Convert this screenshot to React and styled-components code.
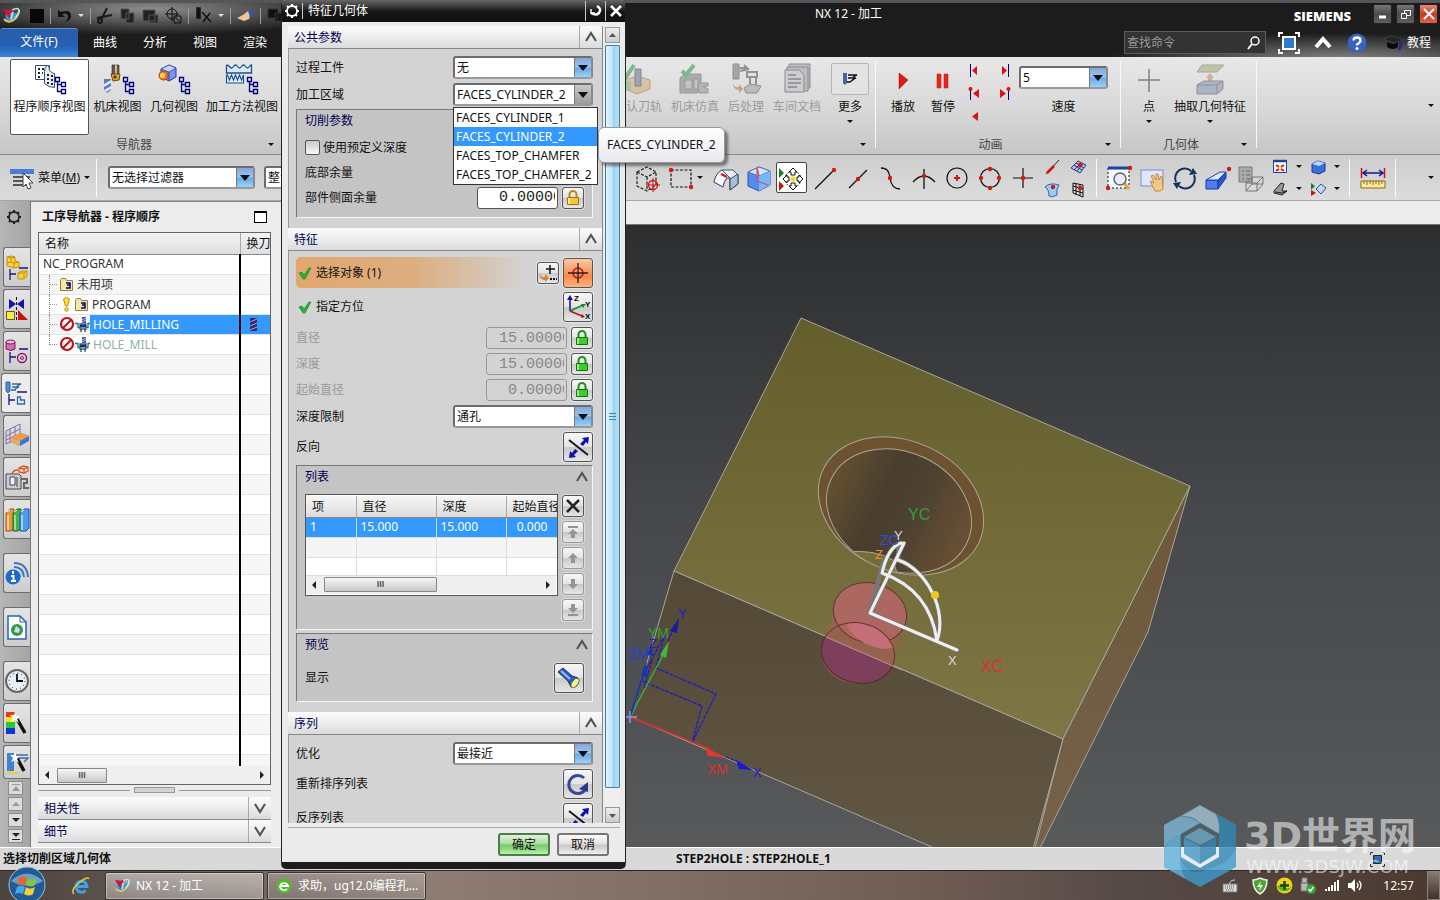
import styled, { createGlobalStyle, css } from "styled-components";

//////////////////////////////////////////[Styles section]//////////////////////////////////////////

const GlobalStyle = createGlobalStyle`
    * { box-sizing: border-box; }

    body {
        margin: 0;
        overflow: hidden;
        font: 12px/16px "Noto Sans", "Noto Sans CJK SC", sans-serif;
        color: #111;
        background: #333;
    }

    button, input, select { font: inherit; color: inherit; margin: 0; }
    button { padding: 0; }
`;

const Page = styled.div`
    position: relative;
    display: flex;
    flex-direction: column;
    height: 100vh;
    overflow: hidden;
`;

const Svg = styled.svg`
    display: block;
    flex: none;
    width: ${(props) => props.$w || 32}px;
    height: ${(props) => props.$h || props.$w || 32}px;
    overflow: visible;
`;

const Caret = styled.i`
    flex: none;
    border: 3px solid transparent;
    border-top-color: ${(props) => props.$color || "#111"};
    border-bottom: 0;
`;

const Spacer = styled.div`
    flex: ${(props) => (props.$w ? `0 0 ${props.$w}px` : "1")};
`;

/* header */

const Header = styled.header`
    flex: none;
    background: radial-gradient(ellipse 210px 26px at 150px 6px, #8d8d8d, transparent),
        radial-gradient(ellipse 240px 28px at 1340px 58px, #8a8a8a, transparent), #1c1c1c;
    border-top: 3px solid #55565a;
    color: #fff;
`;

const TitleRow = styled.div`
    display: flex;
    align-items: center;
    height: 25px;
`;

const QuickAccess = styled.div`
    display: flex;
    align-items: center;
    gap: 6px;
    width: 284px;
    padding-left: 2px;
    overflow: hidden;
`;

const QuickDivider = styled.i`
    width: 1px;
    height: 16px;
    background: #999;
`;

const WindowTitle = styled.div`
    flex: 1;
    padding: 0 0 4px 531px;
`;

const Brand = styled.div`
    margin-right: 20px;
    font-family: "Open Sans", sans-serif;
    font-weight: 800;
    font-size: 13px;
`;

const WindowButton = styled.button`
    display: grid;
    place-items: center;
    width: 19px;
    height: 20px;
    margin: 0 2px 3px;
    border: 1px solid #222;
    border-radius: 2px;
    background: ${(props) =>
        props.$close ? "linear-gradient(#e88a78, #c93a22 50%, #e0624a)" : "linear-gradient(#777, #4b4b4b 50%, #5e5e5e)"};
`;

const TabRow = styled.nav`
    display: flex;
    align-items: center;
    height: 29px;
`;

const Tab = styled.a`
    width: 50px;
    color: #fff;
    text-align: center;
    text-decoration: none;
    ${(props) =>
        props.$active &&
        css`
            align-self: stretch;
            width: 78px;
            margin-right: 2px;
            padding-top: 5px;
            border-radius: 3px 3px 0 0;
            border-top: 1px solid #5f8fd0;
            background: linear-gradient(#2a5ca8, #2360b4 60%, #3c86d8);
        `}
`;

const Search = styled.label`
    display: flex;
    align-items: center;
    width: 142px;
    height: 23px;
    margin-right: 10px;
    padding: 0 4px 0 2px;
    border: 1px solid #5c5c5c;
    background: #333;

    input {
        min-width: 0;
        flex: 1;
        border: 0;
        padding: 0;
        background: none;
        outline: none;
    }
    input::placeholder { color: #9a9a9a; }
`;

const PlainButton = styled.button`
    display: flex;
    align-items: center;
    justify-content: center;
    gap: 4px;
    flex: none;
    width: ${(props) => (props.$w ? `${props.$w}px` : "auto")};
    border: 0;
    background: none;
`;

/* ribbon */

const Ribbon = styled.div`
    display: flex;
    flex: none;
    height: 98px;
    background: linear-gradient(#e8e8e8, #d9d9d9 50%, #c6c6c6);
    border-bottom: 1px solid #8c8c8c;
`;

const RibbonGroup = styled.section`
    position: relative;
    display: flex;
    flex-direction: column;
    flex: none;
    width: ${(props) => props.$w}px;
    padding-top: 2px;
    ${(props) =>
        props.$line &&
        css`
            &::after {
                content: "";
                position: absolute;
                right: 0;
                top: 4px;
                bottom: 6px;
                width: 1px;
                background: #f8f8f8;
            }
        `}
`;

const RibbonItems = styled.div`
    display: flex;
    flex: 1;
    padding-left: ${(props) => props.$pad || 0}px;
`;

const GroupLabel = styled.div`
    display: flex;
    align-items: center;
    height: 24px;
    padding-right: 10px;
    color: #444;

    span { flex: 1; text-align: center; }
`;

const RibbonButton = styled.button`
    display: flex;
    flex-direction: column;
    align-items: center;
    flex: none;
    width: ${(props) => props.$w}px;
    height: 76px;
    padding-top: 3px;
    border: 1px solid ${(props) => (props.$active ? "#555" : "transparent")};
    border-radius: 2px;
    background: ${(props) => (props.$active ? "#fff" : "none")};
    white-space: nowrap;
    ${(props) => props.disabled && "color: #9b9b9b;"}
    ${(props) => (props.disabled || props.$pale) && "svg { opacity: 0.5; }"}

    span { margin: 4px 0 5px; }
`;

const MoreFrame = styled.i`
    display: grid;
    place-items: center;
    width: 38px;
    height: 32px;
    border: 1px solid #b5b5b5;
    border-radius: 2px;
    background: #e3e3e3;
`;

const PlayGrid = styled.div`
    display: grid;
    grid-template-columns: 29px 27px;
    grid-auto-rows: 23px;
    width: 56px;
`;

const SpeedField = styled.label`
    display: flex;
    flex-direction: column;
    align-items: center;
    gap: 10px;
    padding-top: 7px;
`;

/* selection bar */

const SelectionBar = styled.div`
    display: flex;
    align-items: center;
    flex: none;
    height: 46px;
    background: linear-gradient(#cdcdcd, #dcdcdc);
    border-bottom: 1px solid #a5a5a5;
`;

const ToolButton = styled.button`
    display: grid;
    place-items: center;
    flex: none;
    width: ${(props) => (props.$active ? 31 : props.$w || 33)}px;
    height: ${(props) => props.$h || 31}px;
    margin: 0 ${(props) => (props.$active ? 1 : 0)}px;
    border: ${(props) => (props.$active ? "1px solid #444" : "0")};
    border-radius: 2px;
    background: ${(props) => (props.$active ? "#fff" : "none")};
`;

const ToolGrid = styled.div`
    display: grid;
    grid-template-columns: ${(props) => props.$cols};
    align-items: center;
    justify-items: center;
`;

const BarLine = styled.i`
    flex: none;
    width: 1px;
    height: 38px;
    margin: 0 ${(props) => props.$gap || 6}px;
    background: #fafafa;
`;

/* select */

const SelectBox = styled.div`
    position: relative;
    flex: none;
    width: ${(props) => props.$w}px;
    height: 23px;
    border: 2px solid #6c6c6c;
    border-bottom-color: #999;
    border-right-color: #8a8a8a;
    border-radius: 3px;
    background: #fff;

    select {
        position: relative;
        z-index: 1;
        appearance: none;
        width: 100%;
        height: 100%;
        padding: 0 16px 0 2px;
        border: 0;
        outline: none;
        background: none;
        line-height: 16px;
    }

    &::before {
        content: "";
        position: absolute;
        top: 0;
        right: 0;
        width: 16px;
        height: 100%;
        border-left: 1px solid #777;
        background: ${(props) =>
            props.$open ? "linear-gradient(#c9c9c9, #9c9c9c)" : "linear-gradient(#7fa9dc, #9cc2ee 45%, #6aaae8 55%, #9bd2fa)"};
    }

    &::after {
        content: "";
        position: absolute;
        top: 7px;
        right: 3px;
        border: 5px solid transparent;
        border-top: 6px solid #111;
        border-bottom: 0;
        pointer-events: none;
    }
`;

/* workspace */

const Workspace = styled.main`
    display: flex;
    flex: 1;
    min-height: 0;
    background: #ececec;
`;

const ResourceBar = styled.aside`
    display: flex;
    flex-direction: column;
    align-items: flex-end;
    gap: 2px;
    flex: none;
    width: 31px;
    padding-top: 8px;
    background: linear-gradient(90deg, #b6b6b6, #a5a5a5);
    border-right: 1px solid #777;
    overflow: hidden;
`;

const ResourceTab = styled.button`
    display: grid;
    place-items: center;
    flex: none;
    width: ${(props) => (props.$active ? 29 : 27)}px;
    height: ${(props) => props.$h || 40}px;
    margin-top: ${(props) => props.$gap || 0}px;
    border: 1px solid #6d6d6d;
    border-right: 0;
    border-radius: 3px 0 0 3px;
    background: ${(props) => (props.$active ? "#ececec" : "linear-gradient(#e4e4e4, #cdcdcd)")};
    overflow: hidden;
`;

const GearSlot = styled.div`
    width: 31px;
    height: 36px;
    padding-left: 7px;
`;

const MiniScroll = styled.button`
    display: grid;
    place-items: center;
    flex: none;
    width: 15px;
    height: 14px;
    margin-right: 7px;
    border: 1px solid #8a8a8a;
    background: #dcdcdc;
`;

const Navigator = styled.section`
    display: flex;
    flex-direction: column;
    flex: none;
    width: 251px;
    padding: 0 11px 4px 7px;
    border-top: 1px solid #888;
`;

const NavigatorTitle = styled.h2`
    display: flex;
    align-items: center;
    justify-content: space-between;
    height: 30px;
    margin: 0;
    padding: 0 4px;
    font-size: 12px;
`;

const MaximizeButton = styled.button`
    width: 13px;
    height: 12px;
    border: 1px solid #000;
    border-top-width: 2px;
    background: #fff;
`;

const TreeFrame = styled.div`
    display: flex;
    flex-direction: column;
    flex: 1;
    min-height: 0;
    border: 1px solid #666;
    background: #fff;
`;

const TreeScroll = styled.div`
    flex: 1;
    min-height: 0;
    overflow: hidden;
`;

const Tree = styled.table`
    width: 100%;
    table-layout: fixed;
    border-collapse: collapse;

    th {
        height: 21px;
        padding: 2px 6px 0;
        overflow: hidden;
        text-align: left;
        font-weight: normal;
        white-space: nowrap;
        background: linear-gradient(#f3f3f3, #dddfe0);
        border-bottom: 1px solid #888;
    }
    th + th { width: 30px; border-left: 1px solid #aaa; }

    td {
        height: 20px;
        padding: 0;
        color: #333;
        border-bottom: 1px solid #e3e3e3;
    }
    td + td { border-left: 2px solid #000; }
    tr:nth-child(even) td { background: #f6f6f6; }
`;

const TreeCell = styled.div`
    display: flex;
    align-items: center;
    height: 19px;
    padding-left: ${(props) => (props.$root ? 4 : 10)}px;
    white-space: nowrap;
`;

const Branch = styled.i`
    align-self: flex-start;
    flex: none;
    width: 9px;
    height: ${(props) => (props.$last ? 10 : 20)}px;
    margin-right: 1px;
    border-left: 1px dotted #888;
    background: linear-gradient(90deg, #999 50%, transparent 50%) 0 9px / 2px 1px repeat-x;
`;

const TreeLabel = styled.span`
    flex: 1;
    padding-left: 3px;
    line-height: 19px;
    color: ${(props) => props.$color || "inherit"};
    background: ${(props) => (props.$selected ? "#3399ff" : "none")};
`;

const ToolMark = styled.div`
    height: 19px;
    padding: 3px 0 0 9px;
    background: ${(props) => (props.$selected ? "#3399ff" : "none")};
`;

const HScroll = styled.div`
    display: flex;
    align-items: center;
    flex: none;
    height: 18px;
    padding: 0 6px;
    background: #efefef;
`;

const HThumb = styled.div`
    width: ${(props) => props.$w}px;
    height: 15px;
    margin: 0 auto 0 8px;
    border: 1px solid #888;
    border-radius: 1px;
    background: linear-gradient(#f5f5f5, #e0e0e0 50%, #c8c8c8);
    color: #555;
    font: bold 9px/12px "Liberation Sans", sans-serif;
    text-align: center;
`;

const SideArrow = styled.i`
    border: 4px solid transparent;
    ${(props) => (props.$right ? "border-left-color: #222; border-right: 0;" : "border-right-color: #222; border-left: 0;")}
`;

const Splitter = styled.div`
    display: flex;
    align-items: center;
    gap: 4px;
    height: 12px;
    padding-bottom: 2px;

    &::before, &::after { content: ""; flex: 1; height: 1px; background: #999; }
    i { width: 41px; height: 6px; border: 1px solid #999; background: #d3d3d3; }
`;

const barHead = css`
    display: flex;
    align-items: center;
    flex: none;
    width: 100%;
    height: 23px;
    padding: 0 0 0 6px;
    border: 0;
    border-bottom: 1px solid #888;
    background: linear-gradient(#fbfbfb, #eceded 50%, #d9dbdc);
    color: #000050;
    text-align: left;

    span {
        flex: 1;
        align-self: stretch;
        margin-right: 5px;
        line-height: 23px;
        border-right: 1px solid #aaa;
    }
    svg { margin-right: 5px; }
`;

const FoldBar = styled.button`
    ${barHead}
`;

const Viewport = styled.div`
    flex: 1;
    display: flex;
    min-width: 0;
    margin-top: 23px;
    background: linear-gradient(#2d2e2f, #45474a 45%, #58595b);
    border-top: 1px solid #777;
    overflow: hidden;
`;

const Scene = styled.svg`
    display: block;
    width: 100%;
    height: 100%;
    font-family: "Liberation Sans", sans-serif;
`;

/* status + taskbar */

const StatusBar = styled.footer`
    display: flex;
    align-items: center;
    flex: none;
    height: 23px;
    padding: 0 55px 0 3px;
    border-top: 1px solid #fff;
    background: #d9d9d9;
    font-weight: bold;
`;

const Taskbar = styled.div`
    display: flex;
    align-items: center;
    flex: none;
    height: 30px;
    border-top: 1px solid #2c2520;
    background: linear-gradient(90deg, #4b4340 0, #8d7d75 30%, #826f66 45%, #6e5c53 65%, #564a48 78%, #4c3a2f 100%);
    color: #fff;
`;

const TaskButton = styled.button`
    display: flex;
    align-items: center;
    gap: 6px;
    width: 159px;
    height: 28px;
    margin-right: 3px;
    padding-left: 8px;
    border: 1px solid #3c3430;
    border-radius: 2px;
    box-shadow: inset 0 0 0 1px rgba(255, 255, 255, 0.35);
    white-space: nowrap;
    background: linear-gradient(rgba(255, 255, 255, ${(props) => (props.$active ? 0.5 : 0.25)}), rgba(255, 255, 255, ${(props) => (props.$active ? 0.3 : 0.08)}));
`;

const ShowDesktop = styled.button`
    width: 13px;
    height: 29px;
    border: 1px solid #8b8078;
    background: linear-gradient(#857a74, #40332b);
`;

const Watermark = styled.div`
    position: absolute;
    right: 24px;
    bottom: 13px;
    z-index: 3;
    display: flex;
    align-items: center;
    gap: 8px;
    pointer-events: none;
    color: rgba(255, 255, 255, 0.55);

    strong { display: block; font: bold 38px/42px "DejaVu Sans", "Noto Sans CJK SC", sans-serif; }
    small { display: block; padding-left: 2px; font: 18px/20px "DejaVu Sans", sans-serif; }
`;

/* dialog */

const Dialog = styled.section`
    position: absolute;
    z-index: 5;
    left: 281px;
    top: 0;
    bottom: 31px;
    display: flex;
    flex-direction: column;
    width: 345px;
    border: 1px solid #222;
    border-top: 0;
    border-bottom: 7px solid #1c1c1c;
    border-radius: 5px;
    background: #ebebeb;
`;

const DialogTitle = styled.div`
    display: flex;
    align-items: center;
    flex: none;
    height: 22px;
    border-radius: 4px 4px 0 0;
    background: linear-gradient(#666, #2a2a2a 40%, #161616 50%, #101010);
    color: #fff;

    h1 {
        flex: 1;
        margin: 0;
        padding-left: 5px;
        font-size: 12px;
        font-weight: normal;
        border-left: 1px solid #ccc;
    }
`;

const DialogTitleButton = styled.button`
    display: grid;
    place-items: center;
    width: 20px;
    height: 20px;
    border: 0;
    border-left: ${(props) => (props.$line ? "1px solid #ccc" : "0")};
    background: none;
`;

const DialogBody = styled.div`
    display: flex;
    flex: 1;
    min-height: 0;
    margin: 4px 5px 0 6px;
    border-bottom: 2px solid #eee;
`;

const DialogScroll = styled.div`
    width: 315px;
    overflow: hidden;
    border-right: 1px solid #888;
    background: #d3d3d3;
`;

const Section = styled.div`
    padding: ${(props) => props.$top || 5}px 9px 10px 7px;
    border-left: 1px solid #999;
`;

const SectionHead = styled.button`
    ${barHead}
`;

const Row = styled.div`
    display: flex;
    align-items: center;
    gap: 4px;
    height: ${(props) => props.$h || 27}px;
    padding-left: ${(props) => props.$pad || 0}px;
    color: ${(props) => (props.$dim ? "#999" : "#111")};

    > label, > span { flex: 1; }
`;

const SelectRow = styled(Row)`
    border-radius: 5px 0 0 5px;
    background: linear-gradient(90deg, #e2a76e, #dcae80 40%, #d3d3d3 78%);
`;

const Group = styled.fieldset`
    min-width: 0;
    margin: ${(props) => props.$gap}px 0 0;
    padding: 0 8px ${(props) => props.$bottom}px;
    border: 1px solid #777;
    border-bottom-color: #f5f5f5;
    border-right-color: #f5f5f5;
    background: #c4c4c4;
`;

const GroupHead = styled.div`
    display: flex;
    align-items: center;
    justify-content: space-between;
    height: 22px;
    margin: 0 -4px ${(props) => props.$gap || 0}px 0;
    color: #000050;
`;

const CheckLabel = styled.label`
    display: flex;
    align-items: center;
    gap: 3px;

    input {
        appearance: none;
        width: 15px;
        height: 15px;
        border: 1px solid #555;
        border-radius: 2px;
        background: linear-gradient(#c9c9c9, #fafafa);
    }
`;

const NumberInput = styled.input`
    width: 81px;
    height: 22px;
    padding: 0 2px 0 ${(props) => props.$indent}px;
    border: 1px solid ${(props) => (props.disabled ? "#999" : "#555")};
    border-radius: 3px;
    outline: none;
    background: ${(props) => (props.disabled ? "#d3d3d3" : "#fff")};
    color: ${(props) => (props.disabled ? "#888" : "#222")};
    font: 15px "Liberation Mono", monospace;
`;

const IconButton = styled.button`
    display: grid;
    place-items: center;
    flex: none;
    width: ${(props) => props.$s || 22}px;
    height: ${(props) => props.$s || 22}px;
    border: 1px solid ${(props) => (props.disabled ? "#999" : "#555")};
    border-radius: 3px;
    box-shadow: 0 0 0 1px rgba(255, 255, 255, 0.4);
    background: ${(props) =>
        props.$hot ? "linear-gradient(#fcc9a5, #f78b4a 60%, #ffb27c)" : "linear-gradient(#f7f7f7, #e3e3e3 50%, #c9c9c9 52%, #e6e6e6)"};
`;

const ListArea = styled.div`
    display: flex;
    align-items: flex-start;
    gap: 4px;
`;

const ListFrame = styled.div`
    width: 254px;
    padding: 1px 1px 1px 0;
    border: 1px solid #555;
    background: #fff;
    overflow: hidden;
`;

const ListTable = styled.table`
    width: 280px;
    table-layout: fixed;
    border-collapse: collapse;

    th {
        height: 21px;
        padding: 2px 6px 0;
        font-weight: normal;
        text-align: left;
        white-space: nowrap;
        background: linear-gradient(#f6f6f6, #dcdcdc);
        border-right: 1px solid #aaa;
        border-bottom: 1px solid #888;
    }
    td {
        height: 20px;
        padding: 0 4px;
        border-right: 1px solid #ddd;
        border-bottom: 1px solid #ddd;
    }
    tbody tr:first-child td { background: #3399ff; color: #fff; }
    tbody tr:nth-child(2) td { background: #f5f5f5; }
    tbody tr:last-child td { height: 18px; }
`;

const ListButtons = styled.div`
    display: flex;
    flex-direction: column;
    gap: 4px;
    padding-top: 1px;
`;

const VScroll = styled.div`
    display: flex;
    flex-direction: column;
    gap: 2px;
    width: 15px;
    margin-left: 2px;
    background: #efefef;
`;

const VArrow = styled.button`
    display: grid;
    place-items: center;
    flex: none;
    width: 15px;
    height: 16px;
    margin-top: ${(props) => (props.$up ? 1 : 0)}px;
    border: 1px solid #999;
    background: linear-gradient(#eee, #ccc);
`;

const VThumb = styled.div`
    display: grid;
    place-items: center;
    flex: 1;
    margin-bottom: 17px;
    border: 1px solid #3d7fa8;
    border-radius: 1px;
    background: linear-gradient(90deg, #def2fc, #c5e7f8 45%, #9ed3ee 55%, #b5e0f5);
`;

const DialogFooter = styled.div`
    display: flex;
    justify-content: flex-end;
    gap: 7px;
    flex: none;
    margin: 2px 5px 0 6px;
    padding: 5px 11px 6px 0;
    border-top: 1px solid #aaa;
`;

const FooterButton = styled.button`
    width: 52px;
    height: 23px;
    border: 2px solid #777;
    border-radius: 3px;
    background: linear-gradient(#fafafa, #e2e2e2 48%, #c6c6c6 52%, #eee);
    ${(props) => props.$ok && "border-color: #4b7d45; background: linear-gradient(#dff3d9, #a9dba0 48%, #76c869 52%, #b5f0a4);"}
`;

const Options = styled.ul`
    position: absolute;
    z-index: 2;
    left: -2px;
    top: 22px;
    width: 145px;
    margin: 0;
    padding: 0;
    border: 1px solid #333;
    background: #fff;
    list-style: none;
`;

const Option = styled.li`
    height: 19px;
    padding: 0 2px;
    line-height: 19px;
    white-space: nowrap;
    background: ${(props) => (props.$selected ? "#3399ff" : "none")};
    color: ${(props) => (props.$selected ? "#fff" : "#111")};
`;

const Tooltip = styled.div`
    position: absolute;
    z-index: 6;
    left: 598px;
    top: 127px;
    padding: 9px 8px;
    border: 1px solid #999;
    border-radius: 6px;
    background: linear-gradient(#fff, #e9e9ee);
    box-shadow: 3px 3px 3px rgba(0, 0, 0, 0.45);
`;

//////////////////////////////////////////[Icons section]//////////////////////////////////////////

const Fold = ({ down }) => (
    <Svg $w={12} viewBox="0 0 12 12">
        <path d={down ? "M1 2 6 10 11 2" : "M1 10 6 2 11 10"} fill="none" stroke="#555" strokeWidth="2.2" />
    </Svg>
);

const Gear = ({ color = "#222", size = 16 }) => (
    <Svg $w={size} viewBox="0 0 16 16" fill="none" stroke={color}>
        <circle cx="8" cy="8" r="5" strokeWidth="1.8" />
        <path d="M8 1v2M8 13v2M1 8h2M13 8h2M3 3l1.5 1.5M11.500 11.500 13 13M13 3l-1.500 1.500M4.500 11.500 3 13" strokeWidth="2" />
    </Svg>
);

const NxLogo = ({ size = 18 }) => (
    <Svg $w={size} viewBox="0 0 18 18">
        <path d="M4 6q-2 8 5 9 6-1 8-9" fill="#2c9bd6" />
        <path d="M2 12c5 6 14 1 15-9" fill="none" stroke="#f1c04f" strokeWidth="2" />
        <path d="M10 3q6-3 7 0t-4 8" fill="none" stroke="#bfe6f7" strokeWidth="1.500" />
        <path d="m1 2 7 1 2-1 1 3-3 7-4-5z" fill="#c7193a" />
        <path d="m9 6 3-2-2 9-2-1z" fill="#9ddcf7" />
    </Svg>
);

const Hierarchy = () => (
    <path d="M22.500 14.500h4v4h-4zM28.500 19.500h4v4h-4zM28.500 26.500h4v4h-4zM24.500 19v9.500h4M24.500 21.500h4" fill="none" stroke="#000080" strokeWidth="1.300" />
);

const ProgramViewIcon = () => (
    <Svg $w={34} $h={32} viewBox="0 0 34 32">
        <path d="M2.500 2.500h14v14h-14z" fill="#fff" stroke="#35507f" />
        <path d="M11.500 8.500q0-5 3-6 2 0 2 5 3 3 5 3v14q-6 0-10-4z" fill="#e6ecf8" stroke="#35507f" />
        <path d="M5 6h2M9 6h2M5 10h2M9 10h1M5 14h2M14 12h2M18 13h2M14 16h2M18 17h2M14 20h2M18 21h2" stroke="#222" strokeWidth="2" />
        <Hierarchy />
    </Svg>
);

const MachineViewIcon = () => (
    <Svg $w={34} $h={32} viewBox="0 0 34 32">
        <path d="M11 2h7v10h-7z" fill="#6a5744" stroke="#222" strokeWidth=".6" />
        <path d="M14 2h2v10h-2z" fill="#c3b5a5" />
        <path d="M10 11h9l-1 6-6 1z" fill="#e7a12c" stroke="#6d4504" />
        <circle cx="14" cy="14" r="1.500" fill="#333" />
        <path d="M3 16h7v11l-4 3-3-3z" fill="#5a7bb4" />
        <path d="m3 21 7-4v3l-7 4zM3 27l7-4v3l-5 3z" fill="#dbe7fa" />
        <Hierarchy />
    </Svg>
);

const GeometryViewIcon = () => (
    <Svg $w={34} $h={32} viewBox="0 0 34 32">
        <path d="m4 6 8-4 7 3v9l-7 4-8-4z" fill="#7d92ef" stroke="#2c3c8c" />
        <path d="m4 6 8 3 7-4-7-3z" fill="#c9d3ff" stroke="#2c3c8c" strokeWidth=".7" />
        <path d="M12 9v9" stroke="#2c3c8c" />
        <circle cx="6.500" cy="12.500" r="4.500" fill="#f07d24" stroke="#b33a0a" />
        <circle cx="5.500" cy="12.500" r="2.500" fill="#ffd75e" />
        <Hierarchy />
    </Svg>
);

const MethodViewIcon = () => (
    <Svg $w={34} $h={32} viewBox="0 0 34 32">
        <path d="M1.500 2v8h25V2c-2 0-2 3-4 3s-2-3-4-3-2 3-4 3-2-3-4-3-2 3-4 3-2-3-5-3" fill="#d7eafa" stroke="#1c4f8f" strokeWidth="1.300" />
        <path d="M1.500 12v8h17v-8l-2 5-2-5-2 5-2-5-2 5-2-5-2 5-2-5z" fill="#d7eafa" stroke="#1c4f8f" strokeWidth="1.100" />
        <Hierarchy />
    </Svg>
);

const VerifyIcon = () => (
    <Svg viewBox="0 0 32 32">
        <path d="m3 17 12-4 13 4v9l-13 5-12-5z" fill="#cfa86a" stroke="#8b6b3c" />
        <path d="M3 17v9l6 2V19z" fill="#6fa56f" />
        <path d="M13 6h6v17h-6z" fill="#5a6890" stroke="#333" />
        <path d="m0 9 4 5L12 2" fill="none" stroke="#1b8a3a" strokeWidth="4" />
    </Svg>
);

const SimulateIcon = () => (
    <Svg viewBox="0 0 32 32">
        <path d="m1 15 5-4h16v15l-4 4H1z" fill="#777" stroke="#555" />
        <path d="M6 17h7v9H6zM15 16h4v10h-4z" fill="#aaa" stroke="#555" />
        <path d="M19 20h10v3h-5l5 3v4h-9z" fill="#8a8a8a" stroke="#555" />
        <path d="m3 8 4 4L15 2" fill="none" stroke="#1b8a3a" strokeWidth="4" />
    </Svg>
);

const PostIcon = () => (
    <Svg viewBox="0 0 32 32">
        <path d="M3 1h6v15H3z" fill="#667" stroke="#444" />
        <path d="M9 5h8l-3-3M10 8l9-2M17 9h10v5H17zM20 14v10M26 14v8" fill="none" stroke="#444" strokeWidth="2" />
        <path d="m14 25 6-4 11 2-4 7H16z" fill="#999" stroke="#444" />
        <path d="M3 20q1 5 6 4v-3l4 5-4 4v-3q-6 0-6-7" fill="#a06a33" />
    </Svg>
);

const ShopDocIcon = () => (
    <Svg viewBox="0 0 32 32" fill="#9a9ca6" stroke="#333">
        <path d="M8 1h21v24H8z" />
        <path d="M6 4h21v24H6z" />
        <path d="M4 7h14l5 5v17H4z" fill="#b9bbc4" />
        <path d="M7 12h8M7 16h13M7 20h13M7 24h9" strokeWidth="1.500" />
    </Svg>
);

const MoreIcon = () => (
    <Svg $w={18} viewBox="0 0 18 18">
        <path d="M2 3h4v10l-2 2-2-2z" fill="#4861a8" />
        <path d="M7 5h9l-4 2M7 8h8l-4 2M6 12h3l4-3" fill="none" stroke="#111" strokeWidth="1.300" />
    </Svg>
);

const Play = () => (
    <Svg viewBox="0 0 32 32">
        <path d="m12 10 9 7-9 9z" fill="#e11b12" stroke="#a10" strokeWidth=".5" />
    </Svg>
);

const Pause = () => (
    <Svg viewBox="0 0 32 32">
        <path d="M10 11h4v14h-4zM17 11h4v14h-4z" fill="#e8281d" stroke="#b41a12" strokeWidth=".5" />
    </Svg>
);

const Step = ({ kind }) => (
    <Svg $w={12} viewBox="0 0 12 12">
        {kind === "back" && <path d="M9 2v9L3 6.500z" fill="#d11" />}
        {kind === "first" && <path d="M8 2v9L3 6.500z" fill="#d11" />}
        {kind === "last" && <path d="M4 2v9l5-4.500z" fill="#d11" />}
        {kind === "prev" && <path d="M10 2v9L4 6.500z" fill="#d11" />}
        {kind === "next" && <path d="M2 2v9l6-4.500z" fill="#d11" />}
        {(kind === "first" || kind === "prev") && <path d="M1.500 0v13" stroke="#000080" />}
        {(kind === "last" || kind === "next") && <path d="M10.500 0v13" stroke="#000080" />}
        {kind === "prev" && <circle cx="1.500" cy="2" r="2" fill="#d11" />}
        {kind === "next" && <circle cx="10.500" cy="2" r="2" fill="#d11" />}
    </Svg>
);

const PointIcon = () => (
    <Svg viewBox="0 0 32 32">
        <path d="M16 6v23M5 17h22" stroke="#222" strokeWidth="1.500" />
    </Svg>
);

const ExtractIcon = () => (
    <Svg viewBox="0 0 32 32">
        <path d="M8 2h22l-7 7H3z" fill="#a3a45f" stroke="#666" />
        <path d="m16 10 4 5h-2v6h-4v-6h-2z" fill="#b98351" />
        <path d="m3 22 7-4h19v8l-6 5H3z" fill="#7c89b5" stroke="#444" />
        <path d="M3 22h20l6-4M23 22v9" fill="none" stroke="#444" />
    </Svg>
);

const RedDot = ({ x, y }) => <circle cx={x} cy={y} r="2.200" fill="#cf1a10" />;

const toolIcons = {
    cube: (
        <>
            <path d="m3 8 10-5 9 5v13l-9 6-10-5zM3 8l10 5 9-5M13 13v14" fill="none" stroke="#222" strokeWidth="1.200" strokeDasharray="3 1.500" />
            <circle cx="19" cy="21" r="4.500" fill="none" stroke="#c11" strokeWidth="1.300" />
            <path d="M19 14v14M12 21h14" stroke="#c11" />
        </>
    ),
    rect: (
        <>
            <path d="M4 6h20v17H4z" fill="none" stroke="#111" strokeWidth="1.200" strokeDasharray="3 1.500" />
            <RedDot x={4} y={6} />
            <RedDot x={24} y={23} />
        </>
    ),
    shell: (
        <>
            <path d="M2 18q2-9 8-12h11l5 5v9l-8 6V14q-5-2-7 9z" fill="#e9f1fb" stroke="#456" />
            <path d="m18 15 8-5v10l-8 6z" fill="#a9bddb" stroke="#345" />
            <path d="M2 18q2-9 8-12l8 8q-5-2-7 9z" fill="#f8fbff" stroke="#456" />
            <path d="m9 10 6 3" stroke="#d11" strokeWidth="2" />
        </>
    ),
    box: (
        <>
            <path d="m3 8 11-5 11 4v14l-11 6-11-5z" fill="#4f8df0" stroke="#2b55a8" />
            <path d="m3 8 11 4 11-5-11-4z" fill="#cfe6ff" stroke="#5478b8" />
            <path d="M14 12v15l11-6V7z" fill="#76b6f8" />
            <path d="M12 3v14l11 4M12 3l2 9" fill="none" stroke="#e04a5a" strokeWidth="1.200" />
        </>
    ),
    snap: (
        <>
            <path d="m1 4 5 5-5 5z" fill="#0a8a1c" />
            <path d="m1 17 5 5-5 5z" fill="#c3160e" />
            <circle cx="15" cy="15" r="8" fill="none" stroke="#222" strokeDasharray="2 1.500" />
            <path d="m15 4 4 4h-2v3h-4V8h-2zM15 26l4-4h-2v-3h-4v3h-2zM5 15l4-4v2h2v4H9v2zM25 15l-4-4v2h-2v4h2v2z" fill="#fff" stroke="#111" />
            <circle cx="15" cy="15" r="2.500" fill="#f7d519" />
        </>
    ),
    end: (
        <>
            <path d="M4 25 22 7" stroke="#111" strokeWidth="1.200" />
            <RedDot x={23} y={6} />
        </>
    ),
    mid: (
        <>
            <path d="M5 24 23 6" stroke="#111" strokeWidth="1.200" />
            <RedDot x={14} y={15} />
        </>
    ),
    curve: (
        <>
            <path d="M4 4c6 0 8 3 9 10s4 11 10 11" fill="none" stroke="#111" strokeWidth="1.300" />
            <RedDot x={13} y={14} />
        </>
    ),
    cross: (
        <>
            <path d="M3 18q11-12 22 0M14 5v20" fill="none" stroke="#111" strokeWidth="1.300" />
            <RedDot x={14} y={12} />
        </>
    ),
    center: (
        <>
            <circle cx="14" cy="14" r="10" fill="none" stroke="#111" strokeWidth="1.200" />
            <path d="M14 11v6M11 14h6" stroke="#cf1a10" strokeWidth="2" />
        </>
    ),
    quad: (
        <>
            <circle cx="14" cy="14" r="9.500" fill="none" stroke="#111" strokeWidth="1.200" />
            <RedDot x={14} y={5} />
            <RedDot x={14} y={24} />
            <RedDot x={5} y={14} />
            <RedDot x={23} y={14} />
        </>
    ),
    point: (
        <>
            <path d="M14 4v20M4 14h20" stroke="#111" strokeWidth="1.200" />
            <RedDot x={14} y={14} />
        </>
    ),
    zoom: (
        <>
            <path d="M3 4h21v20H3z" fill="#f5f8fc" stroke="#111" strokeDasharray="2 2" />
            <path d="M3 4h22" stroke="#1c41a8" strokeWidth="3" />
            <path d="m19 19 5 6" stroke="#e7a43a" strokeWidth="3" />
            <circle cx="15" cy="15" r="6" fill="#e3eef8" stroke="#666" strokeWidth="1.500" />
            <RedDot x={25} y={4} />
            <RedDot x={3} y={24} />
        </>
    ),
    pan: (
        <>
            <path d="M3 6h22v16H3z" fill="#dfe6fb" stroke="#7b8ccb" />
            <path d="m12 17 4 2-3-7 2-1 3 5 0-6 2 0 1 6 2-4 1 1 1 12-3 2h-5z" fill="#f4c887" stroke="#b97a2c" strokeWidth=".8" />
        </>
    ),
    rotate: (
        <>
            <path d="M5 18A9.500 9.500 0 0 1 20 7M23 11A9.500 9.500 0 0 1 8 22" fill="none" stroke="#15325f" strokeWidth="2" />
            <path d="m18 11 8-1-4-6zM10 18l-8 1 4 6z" fill="#15325f" />
        </>
    ),
    view: (
        <>
            <path d="m2 16 12 0v9H2z" fill="#4f7af0" stroke="#1c3dab" />
            <path d="m2 16 14-8h6l-8 8z" fill="#dbe6ff" stroke="#1c3dab" />
            <path d="m14 16 8-8v6l-8 11z" fill="#2d52cc" stroke="#1c3dab" />
            <RedDot x={25} y={5} />
        </>
    ),
    section: (
        <>
            <path d="M2 3h13v15H2z" fill="#aaa" stroke="#777" />
            <path d="M5 7h2M9 7h4M5 11h2M9 11h4M5 15h2M9 15h4" stroke="#666" />
            <path d="M9 19h11v8H9zM20 19l6-6v7l-6 7M9 19l6-6h11M9 27l6-7h11M15 13v7" fill="none" stroke="#777" />
        </>
    ),
    measure: (
        <>
            <path d="M2.500 4v10M25.500 4v10" stroke="#c11" strokeWidth="1.500" />
            <path d="M4 9h20M8 6 4 9l4 3M20 6l4 3-4 3" fill="none" stroke="#14148c" strokeWidth="1.500" />
            <path d="M2 17h24v7H2z" fill="#ffe89a" stroke="#8a6a14" />
            <path d="M5 17v3M8 17v4M11 17v3M14 17v4M17 17v3M20 17v4M23 17v3" stroke="#8a6a14" />
        </>
    ),
};

const smallIcons = {
    line: (
        <>
            <path d="M2 15 15 1" stroke="#222" />
            <path d="m3 14 7-7" stroke="#c11" strokeWidth="2.500" />
        </>
    ),
    mesh: (
        <>
            <path d="m1 9 7-7 8 4-6 8z" fill="#b7bdea" stroke="#333a80" />
            <path d="m4 11 7-7M7 12l6-7M4 6l8 5M6 4l8 5" stroke="#333a80" />
            <RedDot x={10} y={6} />
        </>
    ),
    face: (
        <>
            <path d="M1 6q5-5 14-2-3 4-2 10-5 3-8 1 0-7-4-9" fill="#9ec9f5" stroke="#2f62a8" />
            <RedDot x={9} y={6} />
        </>
    ),
    grid: (
        <>
            <path d="M3 2 13 4v12L3 12zM3 5l10 3M3 9l10 3M6 3v11M10 3v12" fill="none" stroke="#111" />
            <RedDot x={10} y={7} />
        </>
    ),
    layout: (
        <>
            <path d="M1.500 2.500h13v11h-13z" fill="#fff" stroke="#21409a" />
            <path d="M1 2h14" stroke="#21409a" strokeWidth="2.500" />
            <path d="m4 6 3 2M12 6 9 8M4 12l3-2M12 12l-3-2" stroke="#d11" strokeWidth="2" />
        </>
    ),
    solid: (
        <>
            <path d="m2 5 6-3 7 2v8l-6 3-7-2z" fill="#3b6fe0" stroke="#173a94" />
            <path d="m2 5 7 2 6-3-7-2z" fill="#bcd2ff" />
        </>
    ),
    clip: (
        <>
            <path d="m2 10 7-8 3 1-2 7 5 0-5 4-8-2z" fill="#999" stroke="#222" />
            <path d="m3 11 7 1 5-2" fill="none" stroke="#222" />
        </>
    ),
    show: (
        <>
            <path d="m1 2 4 3-4 4z" fill="#0a8a1c" />
            <path d="m1 9 5 3-5 3z" fill="#c3160e" />
            <path d="m6 8 5-5 5 4-5 6z" fill="#c4d7f7" stroke="#31538f" />
        </>
    ),
};

const ToolIcon = ({ name }) => (
    <Svg $w={28} viewBox="0 0 28 28">
        {toolIcons[name]}
    </Svg>
);

const SmallIcon = ({ name }) => (
    <Svg $w={16} viewBox="0 0 16 16">
        {smallIcons[name]}
    </Svg>
);

const resourceIcons = {
    assembly: (
        <>
            <path d="m2 2 4-1 4 1v4l4 1v5l-5 1-3-1-4-1z" fill="#f8d23c" stroke="#c09010" />
            <path d="m2 2 4 1 4-1M6 3v4l3 1 5-1M9 8v5M6 7l-4 1" fill="none" stroke="#c09010" />
            <path d="M5 14v11M5 19h6M14 13h9" stroke="#14147c" strokeWidth="1.300" />
            <path d="m13 18 3-2h6v5l-3 3h-6z" fill="#f8d23c" stroke="#c09010" />
            <path d="M13 18h6l3-2M19 18v6" fill="none" stroke="#c09010" />
        </>
    ),
    constraint: (
        <>
            <path d="M4 2v10l7-5zM19 2v10l-7-5z" fill="#1111b0" />
            <path d="M11.500 0v24" stroke="#111" strokeDasharray="3 2" />
            <path d="M1.500 14.500h8v8h-8z" fill="#f9f02a" stroke="#555" />
            <path d="M13 13v10h10z" fill="#ca120c" />
        </>
    ),
    part: (
        <>
            <path d="M1 3v7q5 3 9 0V3z" fill="#d46ab4" stroke="#78185c" />
            <ellipse cx="5.500" cy="3" rx="4.500" ry="2" fill="#f2b7de" stroke="#78185c" />
            <path d="M5 13v11M5 18h6M14 10h9" stroke="#14147c" strokeWidth="1.300" />
            <circle cx="17" cy="19" r="4.500" fill="none" stroke="#8a1465" strokeWidth="1.400" />
            <circle cx="17" cy="19" r="1.500" fill="none" stroke="#8a1465" />
        </>
    ),
    operation: (
        <>
            <path d="M2 1h4v9l-2 2-2-2z" fill="#4f8ad0" stroke="#2a68b0" />
            <path d="M8 3h9l-4 2M8 6h7l-4 2M7 9h5" fill="none" stroke="#2a68b0" strokeWidth="1.300" />
            <path d="M5 13v11M5 19h6M13 11h10" stroke="#14147c" strokeWidth="1.300" />
            <path d="M13.500 16h3v3h4v4h-7z" fill="none" stroke="#2a68b0" strokeWidth="1.300" />
        </>
    ),
    feature: (
        <>
            <path d="M1 8 15 1v14L1 21zM1 13l14-7M1 17l14-6M5 6v13M10 4v13" fill="none" stroke="#8c6ba8" />
            <path d="m6 14 10-4 8 3v5l-9 5-9-4z" fill="#3974da" />
            <path d="m6 14 10-4 8 3-9 5z" fill="#f59b40" />
            <path d="m6 14 9 4v5l-9-4z" fill="#e3ac6b" />
        </>
    ),
    machine: (
        <>
            <path d="M1 9h13l2 2v13H1z" fill="#c8ccd4" stroke="#444" />
            <path d="M5 12h5v8H5zM12 12v10" fill="#eaf3ff" stroke="#444" />
            <path d="M16 14h6v4h-3v5h5" fill="none" stroke="#666" strokeWidth="2" />
            <path d="m14 3 4-2 5 1v4l-4 2-5-1zM14 3l5 1 4-2M19 4v4M13 5q-5 0-6 4" fill="none" stroke="#e0551a" strokeWidth="1.300" />
        </>
    ),
    library: (
        <>
            <path d="m1 6 4-4h4v19l-3 3H1z" fill="#f0923a" stroke="#a3560f" />
            <path d="m8 6 4-4h4v19l-3 3H8z" fill="#3fb345" stroke="#14691a" />
            <path d="m15 6 4-4h5v19l-3 3h-6z" fill="#4b9cf0" stroke="#175aa3" />
            <path d="M3 8v15M10 8v15M17 8v15M2 5l3-2M9 5l3-2M16 5l3-2" stroke="#fff" />
        </>
    ),
    info: (
        <>
            <path d="M9 2q13 0 14 14M9 6q9 0 10 10M9 10q5 0 6 6" fill="none" stroke="#3f74c4" strokeWidth="2" />
            <circle cx="8" cy="16" r="7.500" fill="#1c6dcb" />
            <path d="M8 10v3M6 15h2.500v5M6 20h5" stroke="#fff" strokeWidth="2" fill="none" />
        </>
    ),
    web: (
        <>
            <path d="M3 1h12l6 6v17H3z" fill="#fff" stroke="#2a62b2" strokeWidth="1.500" />
            <path d="M15 1v6h6" fill="none" stroke="#2a62b2" />
            <circle cx="12" cy="15" r="6" fill="#36964b" />
            <path d="m9 17 2-6 4 3-1 4z" fill="#bfe3ee" />
        </>
    ),
    clock: (
        <>
            <circle cx="12" cy="12" r="11" fill="#e8eff8" stroke="#666" strokeWidth="2" />
            <circle cx="12" cy="12" r="8" fill="none" stroke="#111" strokeDasharray="1 3.200" />
            <path d="M12 5v7h6" fill="none" stroke="#111" strokeWidth="1.800" />
        </>
    ),
    roles: (
        <>
            <path d="M1 1h9v6H1z" fill="#ea3b16" />
            <path d="M1 6h9v5H1z" fill="#f2e51a" />
            <path d="M1 11h9v6H1z" fill="#29c639" />
            <path d="M1 17h9v6H1z" fill="#0d34d4" />
            <path d="m12 8 8 14" stroke="#111" strokeWidth="3.500" />
            <path d="m10 1 1 4 4 0-3 3 2 4-4-3-4 2 2-4-3-3 4 0z" fill="#fff" />
        </>
    ),
    wizard: (
        <>
            <path d="M2 3h7v18H2z" fill="#3d83d2" />
            <path d="M10 8h13l-4 4M11 5h12" stroke="#3d6cb2" fill="none" strokeWidth="1.500" />
            <path d="m12 8 7 13" stroke="#111" strokeWidth="3.500" />
            <path d="m10 2 1 4 4 0-3 3 2 4-4-3-4 2 2-4-3-3 4 0z" fill="#fff" />
            <path d="M0 24q8-6 15 0" fill="#e5c95a" />
        </>
    ),
};

const FolderIcon = () => (
    <Svg $w={15} viewBox="0 0 15 15">
        <path d="M1.500 13.500v-11l1-1h4l1 2h6v10z" fill="#f4e6a6" stroke="#97813a" />
        <path d="M7 6h4v2H8M11 8v3H7" fill="none" stroke="#000080" strokeWidth="1.500" />
    </Svg>
);

const ForbiddenIcon = () => (
    <Svg $w={16} viewBox="0 0 16 16">
        <circle cx="8" cy="8" r="6" fill="#fff" stroke="#c0101a" strokeWidth="2.200" />
        <path d="m4 12 8-8" stroke="#c0101a" strokeWidth="2" />
    </Svg>
);

const MillIcon = () => (
    <Svg $w={15} viewBox="0 0 15 15">
        <path d="M7 0h4v6H7z" fill="#44509e" />
        <path d="m7 3 4-2M7 5l4-2" stroke="#c4b7e6" />
        <path d="M0 6.500h3v4h2M15 6.500h-2v4h-2M5 7v5h6V7z" fill="none" stroke="#2a7080" strokeWidth="1.300" />
        <path d="M5 9h6" stroke="#1c2a80" strokeWidth="3" />
        <path d="M6 12v3M10 12v3" stroke="#111" />
    </Svg>
);

const AlertIcon = () => (
    <Svg $w={15} viewBox="0 0 15 15">
        <path d="M4.500 2q3-3 6 0L8.500 9h-2z" fill="#ffe030" stroke="#b3930e" />
        <circle cx="7.500" cy="12.500" r="1.800" fill="#ffe030" stroke="#b3930e" />
    </Svg>
);

const Check = () => (
    <Svg $w={14} viewBox="0 0 14 14">
        <path d="m1 7 3-1 2 3 5-7 2 0-6 11H5z" fill="#25b534" stroke="#148021" strokeWidth=".6" />
    </Svg>
);

const Lock = ({ gold }) => (
    <Svg $w={16} viewBox="0 0 16 16">
        <path d="M4.500 7V4.500a3.500 3.500 0 0 1 7 0V7" fill="none" stroke={gold ? "#b58a1c" : "#1f8f1f"} strokeWidth="2" />
        <path d="M2.500 7.500h11v7h-11z" fill={gold ? "#f0c93b" : "#3ecb2e"} stroke={gold ? "#9c7413" : "#147414"} />
        <path d="M4 8v6" stroke={gold ? "#fff0a0" : "#b5f7a0"} strokeWidth="1.500" />
    </Svg>
);

const ReverseIcon = () => (
    <Svg $w={24} viewBox="0 0 24 24">
        <path d="M3 5 22 20" stroke="#111" strokeWidth="1.800" />
        <path d="m23 2-1 7-2-2-3 4-3-2 4-4-2-2zM3 23l1-7 2 2 3-4 3 2-4 4 2 2z" fill="#1010a8" />
    </Svg>
);

const TorchIcon = () => (
    <Svg $w={24} viewBox="0 0 24 24">
        <path d="m1 6 5-4 9 8 6 2-7 9-3-6z" fill="#255cc9" stroke="#0c2a6e" />
        <path d="m4 5 9 8" stroke="#9fc1ff" strokeWidth="2" />
        <ellipse cx="18" cy="17" rx="3" ry="5.500" transform="rotate(36 18 17)" fill="#fff27a" stroke="#556" />
    </Svg>
);

const moves = {
    top: "M3 2h10v2H3zM8 5l5 5h-3v4H6v-4H3z",
    up: "m8 3 5 5h-3v5H6V8H3z",
    down: "m8 13 5-5h-3V3H6v5H3z",
    bottom: "m8 11 5-5h-3V2H6v4H3zM3 12h10v2H3z",
};

//////////////////////////////////////////[Data section]//////////////////////////////////////////

const resourceTabs = [
    ["assembly"],
    ["constraint"],
    ["part"],
    ["operation"],
    ["feature"],
    ["machine"],
    ["library"],
    ["info", 12],
    ["web", 12],
    ["clock", 12],
    ["roles"],
    ["wizard"],
];

const faceOptions = ["FACES_CYLINDER_1", "FACES_CYLINDER_2", "FACES_TOP_CHAMFER", "FACES_TOP_CHAMFER_2"];

const lockedValues = [
    ["直径", "15.00000", 12],
    ["深度", "15.00000", 12],
    ["起始直径", "0.00000", 21],
];

//////////////////////////////////////////[Components section]//////////////////////////////////////////

const Select = ({ id, value, width, open, children }) => (
    <SelectBox $w={width} $open={open}>
        <select id={id} aria-label={id ? undefined : value} defaultValue={value}>
            {(open ? faceOptions : [value]).map((item) => (
                <option key={item}>{item}</option>
            ))}
        </select>
        {children}
    </SelectBox>
);

const TopHeader = () => (
    <Header>
        <TitleRow>
            <QuickAccess>
                <NxLogo />
                <Svg $w={18} viewBox="0 0 18 18"><path d="M4 2h14v14H4z" fill="#080808" /></Svg>
                <QuickDivider />
                <Svg $w={16} viewBox="0 0 16 16"><path d="M2 2v7h7L6 6q6-2 6 3 0 3-4 5 7-1 7-6 0-7-10-4z" fill="#111" /></Svg>
                <Caret $color="#ddd" />
                <QuickDivider />
                <Svg $w={17} viewBox="0 0 17 17"><path d="m1 11 15-3M5 13l6-12" stroke="#1a1a1a" strokeWidth="2" /><circle cx="4" cy="14" r="2" fill="none" stroke="#1a1a1a" strokeWidth="2" /></Svg>
                <Svg $w={17} viewBox="0 0 17 17"><path d="M2 2h8v10H2zM7 6h8v10H7z" fill="#222" stroke="#555" /></Svg>
                <Svg $w={17} viewBox="0 0 17 17"><path d="M1 3h12v11H1zM7 8h9v8H7z" fill="#222" stroke="#555" /></Svg>
                <Svg $w={17} viewBox="0 0 17 17" fill="none" stroke="#111"><circle cx="7" cy="7" r="5" /><path d="M7 0v14M0 7h14M9 9h7v7H9zM11 11l4 4" /></Svg>
                <QuickDivider />
                <Svg $w={17} viewBox="0 0 17 17"><path d="M2 1h3v10H2zM7 5l9 10M15 6 8 15" fill="#111" stroke="#111" strokeWidth="1.500" /></Svg>
                <Caret $color="#ddd" />
                <QuickDivider />
                <Svg $w={18} viewBox="0 0 18 18"><path d="m1 11 6-3 5-4 3 2-2 6-5 2z" fill="#f2c78d" /><path d="m12 3 4-1 1 6-3 3z" fill="#3153b3" /></Svg>
                <QuickDivider />
                <Svg $w={18} viewBox="0 0 18 18"><path d="M2 2h10v9H2zM9 6h8v8H9z" fill="#111" stroke="#333" /></Svg>
            </QuickAccess>
            <WindowTitle>NX 12 - 加工</WindowTitle>
            <Brand>SIEMENS</Brand>
            <WindowButton aria-label="最小化"><Svg $w={10} viewBox="0 0 10 10"><path d="M1 8h7" stroke="#fff" strokeWidth="3" /></Svg></WindowButton>
            <WindowButton aria-label="还原"><Svg $w={10} viewBox="0 0 10 10"><path d="M.500 4.500h5v5h-5zM3.500 4V1.500h6v5H6" fill="none" stroke="#fff" /></Svg></WindowButton>
            <WindowButton $close aria-label="关闭"><Svg $w={10} viewBox="0 0 10 10"><path d="m0 0 10 10M10 0 0 10" stroke="#fff" strokeWidth="2" /></Svg></WindowButton>
        </TitleRow>
        <TabRow>
            <Tab $active href="#file">文件(F)</Tab>
            {["曲线", "分析", "视图", "渲染"].map((name) => (
                <Tab key={name} href={`#${name}`}>{name}</Tab>
            ))}
            <Spacer />
            <Search>
                <input aria-label="查找命令" placeholder="查找命令" />
                <Svg $w={14} viewBox="0 0 14 14"><circle cx="8" cy="5" r="4" fill="none" stroke="#fff" strokeWidth="1.500" /><path d="M5 8 1 13" stroke="#fff" strokeWidth="2" /></Svg>
            </Search>
            <PlainButton $w={26} aria-label="全屏">
                <Svg $w={24} viewBox="0 0 24 24"><path d="M2 6V2h4M18 2h4v4M22 18v4h-4M6 22H2v-4" fill="none" stroke="#fff" strokeWidth="2" /><path d="M6 6h12v12H6z" fill="#2c7ccb" stroke="#fff" strokeWidth="2" /></Svg>
            </PlainButton>
            <Spacer $w={8} />
            <PlainButton $w={26} aria-label="折叠功能区">
                <Svg $w={18} viewBox="0 0 18 18"><path d="m2 13 7-8 7 8" fill="none" stroke="#fff" strokeWidth="4" /></Svg>
            </PlainButton>
            <Spacer $w={9} />
            <PlainButton $w={24} aria-label="帮助">
                <Svg $w={20} viewBox="0 0 20 20"><circle cx="10" cy="10" r="9.500" fill="#3564c4" /><path d="M6.500 7.500q0-3 3.500-3t3.500 3q0 2-3.500 4v1" fill="none" stroke="#fff" strokeWidth="2.300" /><circle cx="10" cy="15.500" r="1.500" fill="#fff" /></Svg>
            </PlainButton>
            <Spacer $w={14} />
            <PlainButton>
                <Svg $w={20} viewBox="0 0 20 20"><path d="m0 6 10-3 10 4-9 3z" fill="#222" stroke="#555" strokeWidth=".5" /><path d="M4 9v5q6 4 11 0V9l-4 2z" fill="#0a0a0a" /><path d="m17 8 1 3-2 6" fill="none" stroke="#26268f" strokeWidth="2.500" /></Svg>
                教程
            </PlainButton>
            <Spacer $w={9} />
        </TabRow>
    </Header>
);

const RibbonBar = () => (
    <Ribbon>
        <RibbonGroup $w={284}>
            <RibbonItems $pad={10}>
                <RibbonButton $w={79} $active><ProgramViewIcon /><span>程序顺序视图</span></RibbonButton>
                <RibbonButton $w={57}><MachineViewIcon /><span>机床视图</span></RibbonButton>
                <RibbonButton $w={56}><GeometryViewIcon /><span>几何视图</span></RibbonButton>
                <RibbonButton $w={80}><MethodViewIcon /><span>加工方法视图</span></RibbonButton>
            </RibbonItems>
            <GroupLabel><span>导航器</span><Caret /></GroupLabel>
        </RibbonGroup>
        <Spacer $w={325} />
        <RibbonGroup $w={267} $line>
            <RibbonItems>
                <RibbonButton $w={58} disabled><VerifyIcon /><span>确认刀轨</span></RibbonButton>
                <RibbonButton $w={56} disabled><SimulateIcon /><span>机床仿真</span></RibbonButton>
                <RibbonButton $w={46} disabled><PostIcon /><span>后处理</span></RibbonButton>
                <RibbonButton $w={56} disabled><ShopDocIcon /><span>车间文档</span></RibbonButton>
                <RibbonButton $w={50}><MoreFrame><MoreIcon /></MoreFrame><span>更多</span><Caret /></RibbonButton>
            </RibbonItems>
            <GroupLabel><span /><Caret /></GroupLabel>
        </RibbonGroup>
        <RibbonGroup $w={245} $line>
            <RibbonItems $pad={7}>
                <RibbonButton $w={40}><Play /><span>播放</span></RibbonButton>
                <RibbonButton $w={40}><Pause /><span>暂停</span></RibbonButton>
                <PlayGrid>
                    {["first", "last", "prev", "next", "back"].map((kind) => (
                        <ToolButton key={kind} $w={24} $h={22} aria-label={kind}><Step kind={kind} /></ToolButton>
                    ))}
                </PlayGrid>
                <SpeedField>
                    <Select value="5" width={89} />
                    速度
                </SpeedField>
            </RibbonItems>
            <GroupLabel><span>动画</span><Caret /></GroupLabel>
        </RibbonGroup>
        <RibbonGroup $w={136} $line>
            <RibbonItems $pad={12}>
                <RibbonButton $w={32} $pale><PointIcon /><span>点</span><Caret /></RibbonButton>
                <RibbonButton $w={90} $pale><ExtractIcon /><span>抽取几何特征</span><Caret /></RibbonButton>
            </RibbonItems>
            <GroupLabel><span>几何体</span><Caret /></GroupLabel>
        </RibbonGroup>
        <Spacer />
        <PlainButton $w={18} aria-label="功能区选项"><Caret /></PlainButton>
    </Ribbon>
);

const Tools = ({ names }) =>
    names.map((name) => (
        <ToolButton key={name} $active={name === "snap"} aria-label={name}>
            <ToolIcon name={name} />
        </ToolButton>
    ));

const SelectionTools = () => (
    <SelectionBar>
        <Spacer $w={10} />
        <PlainButton>
            <Svg $w={24} viewBox="0 0 24 24">
                <path d="M0 3h24v5H0z" fill="#4d7bd8" />
                <path d="M3 11h17M3 15h14M3 19h17" stroke="#555" strokeWidth="2" />
                <path d="M13 7v14l3-3 2 5 3-1-2-5h4z" fill="#fff" stroke="#444" />
            </Svg>
            <span>菜单(<u>M</u>)</span>
            <Caret />
        </PlainButton>
        <BarLine $gap={6} />
        <Spacer $w={5} />
        <Select value="无选择过滤器" width={147} />
        <Spacer $w={9} />
        <Select value="整个装配" width={120} />
        <Spacer $w={247} />
        <Tools names={["cube", "rect"]} />
        <Caret />
        <Spacer $w={6} />
        <Tools names={["shell", "box", "snap", "end", "mid", "curve", "cross", "center", "quad", "point"]} />
        <ToolGrid $cols="26px 26px">
            {["line", "mesh", "face", "grid"].map((name) => (
                <ToolButton key={name} $w={22} $h={22} aria-label={name}><SmallIcon name={name} /></ToolButton>
            ))}
        </ToolGrid>
        <BarLine $gap={5} />
        <Tools names={["zoom", "pan", "rotate", "view", "section"]} />
        <ToolGrid $cols="26px 12px 26px 12px">
            {["layout", "solid", "clip", "show"].map((name) => [
                <ToolButton key={name} $w={22} $h={22} aria-label={name}><SmallIcon name={name} /></ToolButton>,
                <Caret key={`${name}-caret`} />,
            ])}
        </ToolGrid>
        <BarLine $gap={6} />
        <Tools names={["measure"]} />
        <BarLine $gap={6} />
        <Spacer />
        <PlainButton $w={18} aria-label="工具条选项"><Caret /></PlainButton>
    </SelectionBar>
);

const Resources = () => (
    <ResourceBar>
        <GearSlot><Gear /></GearSlot>
        {resourceTabs.map(([name, gap]) => (
            <ResourceTab key={name} $gap={gap} $h={name === "wizard" ? 34 : 40} $active={name === "operation"} aria-label={name}>
                <Svg $w={24} viewBox="0 0 24 24">{resourceIcons[name]}</Svg>
            </ResourceTab>
        ))}
        {["top", "up", "down", "bottom"].map((dir, i) => (
            <MiniScroll key={dir} aria-label={dir}>
                <Svg $w={10} viewBox="0 0 10 10">
                    <path d={["M1 1h8v1H1zM5 3l4 5H1z", "M5 3l4 4H1z", "M5 7l4-4H1z", "M5 6l4-4H1zM1 8h8v1H1z"][i]} fill={i < 2 ? "#999" : "#222"} />
                </Svg>
            </MiniScroll>
        ))}
    </ResourceBar>
);

const TreeRow = ({ icons, label, color, selected, last }) => (
    <tr>
        <td>
            <TreeCell>
                <Branch $last={last} />
                {icons}
                <TreeLabel $color={color} $selected={selected}>{label}</TreeLabel>
            </TreeCell>
        </td>
        <td>
            <ToolMark $selected={selected}>
                {selected && <Svg $w={7} $h={13} viewBox="0 0 7 13"><path d="M0 0h7v13H0z" fill="#2b2b7c" /><path d="m0 4 7-3M0 8l7-3M0 12l7-3" stroke="#d09ac0" /></Svg>}
            </ToolMark>
        </td>
    </tr>
);

const OperationNavigator = () => (
    <Navigator>
        <NavigatorTitle>工序导航器 - 程序顺序<MaximizeButton aria-label="最大化" /></NavigatorTitle>
        <TreeFrame>
            <TreeScroll>
                <Tree>
                    <thead><tr><th>名称</th><th>换刀</th></tr></thead>
                    <tbody>
                        <tr><td><TreeCell $root>NC_PROGRAM</TreeCell></td><td /></tr>
                        <TreeRow icons={<FolderIcon />} label="未用项" />
                        <TreeRow icons={<><AlertIcon /><FolderIcon /></>} label="PROGRAM" />
                        <TreeRow icons={<><ForbiddenIcon /><MillIcon /></>} label="HOLE_MILLING" color="#fff" selected />
                        <TreeRow icons={<><ForbiddenIcon /><MillIcon /></>} label="HOLE_MILL" color="#8fb3a0" last />
                        {Array.from({ length: 60 }, (_, i) => (
                            <tr key={i}><td /><td /></tr>
                        ))}
                    </tbody>
                </Tree>
            </TreeScroll>
            <HScroll><SideArrow /><HThumb $w={50}>III</HThumb><SideArrow $right /></HScroll>
        </TreeFrame>
        <Splitter><i /></Splitter>
        <FoldBar><span>相关性</span><Fold down /></FoldBar>
        <FoldBar><span>细节</span><Fold down /></FoldBar>
    </Navigator>
);

const ModelView = () => (
    <Viewport>
        <Scene viewBox="626 225 814 622" preserveAspectRatio="xMinYMin slice">
            <defs>
                <linearGradient id="top" x1="0" y1="0" x2="0" y2="1"><stop offset="0" stopColor="#645d2c" /><stop offset="1" stopColor="#7e7645" /></linearGradient>
                <linearGradient id="side" x1="0" y1="0" x2="0" y2="1"><stop offset="0" stopColor="#6d5739" /><stop offset="1" stopColor="#75634a" /></linearGradient>
                <linearGradient id="front" x1="0" y1="0" x2="0" y2="1"><stop offset="0" stopColor="#544936" /><stop offset="1" stopColor="#615744" /></linearGradient>
                <linearGradient id="hole"><stop offset="0" stopColor="#63502f" /><stop offset=".35" stopColor="#493e2e" /><stop offset=".6" stopColor="#4d4131" /><stop offset="1" stopColor="#6a5134" /></linearGradient>
                <clipPath id="frontClip"><path d="M674 571 1063 739 1034 850H600V717z" /></clipPath>
                <clipPath id="holeClip"><ellipse cx="899" cy="511" rx="75" ry="59" transform="rotate(25 899 511)" /></clipPath>
                <clipPath id="lensClip"><ellipse cx="870" cy="613" rx="37" ry="30" transform="rotate(14 870 613)" /></clipPath>
            </defs>
            <g stroke="#aaa69b" strokeWidth="1">
                <path d="M801 318 1190 486 1063 739 674 571z" fill="url(#top)" />
                <path d="M674 571 1063 739 1030 860H962L631 717z" fill="url(#front)" />
                <path d="M1190 486 1148 632 1030 868 1063 739z" fill="url(#side)" />
                <ellipse cx="901" cy="506" rx="86" ry="65" transform="rotate(25 901 506)" fill="#6c522e" />
                <ellipse cx="899" cy="511" rx="75" ry="59" transform="rotate(25 899 511)" fill="url(#hole)" />
                <path d="M845 552q30-3 48 8l6 20h-60z" fill="#756c3a" clipPath="url(#holeClip)" />
            </g>
            <path d="M833 613 822 650A36 30 0 0 0 894 657L906 616z" fill="#98604f" opacity=".9" />
            <g clipPath="url(#frontClip)">
                <ellipse cx="858" cy="653" rx="37" ry="30" transform="rotate(14 858 653)" fill="#7e3f5c" stroke="#4c2030" />
            </g>
            <ellipse cx="870" cy="613" rx="37" ry="30" transform="rotate(14 870 613)" fill="#ab6760" stroke="#613530" />
            <ellipse cx="858" cy="653" rx="37" ry="30" transform="rotate(14 858 653)" fill="#c46e78" clipPath="url(#lensClip)" />
            <ellipse cx="858" cy="653" rx="37" ry="30" transform="rotate(14 858 653)" fill="none" stroke="#613530" />
            <path d="M826 637 902 670" stroke="#b99a94" />
            <g fill="none" strokeLinecap="round">
                <path d="M870 613 883 562M870 613 904 543M870 613 957 650M882 573Q930 590 937 641M898 560C926 569 948 610 937 641M882 573Q888 547 901 543M898 560 899 546" stroke="#777" strokeWidth="4.500" />
                <path d="M870 613 904 543M870 613 957 650M882 573Q930 590 937 641M898 560C926 569 948 610 937 641M882 573Q888 547 901 543" stroke="#eee" strokeWidth="3" />
            </g>
            <circle cx="935" cy="595" r="4" fill="#ecc91e" />
            <text x="908" y="520" fontSize="16" fill="#35a035">YC</text>
            <text x="880" y="545" fontSize="14" fill="#2a4fe0">ZC</text>
            <text x="894" y="540" fontSize="13" fill="#ddd">Y</text>
            <text x="875" y="559" fontSize="13" fill="#ef8b2b">Z</text>
            <text x="948" y="665" fontSize="13" fill="#ddd">X</text>
            <text x="981" y="672" fontSize="16" fill="#d6352c">XC</text>
            <g fill="none" stroke="#1c1cc0" strokeWidth="1.300">
                <path d="M642 681 702 706 692 743 716 694 656 668 665 634 645 672M668 641l7-15M726 757l15 6M652 660l-8 28" strokeDasharray="4 1" />
            </g>
            <path d="M630 717 710 749" stroke="#dc3028" strokeWidth="1.500" />
            <path d="m726 758-21-11 3 9z" fill="#e03a30" />
            <path d="m753 770-17-10 3 9z" fill="#1a1ad0" />
            <path d="m679 618-9 13 7 2z" fill="#1a1a9c" />
            <path d="M630 717 663 655" stroke="#3fae3a" strokeWidth="1.500" />
            <path d="m669 641-9 14 6 3z" fill="#45b83c" />
            <path d="M630 717 645 670" stroke="#123aa8" strokeWidth="2" />
            <path d="m646 661-5 15 7 1zM652 644l-5 11 6 1z" fill="#1538b0" />
            <path d="M625 717h12M630 711v12" stroke="#9494e0" strokeWidth="1.500" />
            <text x="707" y="774" fontSize="14" fill="#d6352c">XM</text>
            <text x="753" y="777" fontSize="13" fill="#1c1cd0">X</text>
            <text x="678" y="618" fontSize="13" fill="#1c1cd0">Y</text>
            <text x="648" y="638" fontSize="14" fill="#35a035">YM</text>
            <text x="628" y="659" fontSize="14" fill="#2340d8">ZM</text>
            <text x="649" y="648" fontSize="13" fill="#1c1cd0">Z</text>
        </Scene>
    </Viewport>
);

const FeatureDialog = () => (
    <Dialog>
        <DialogTitle>
            <DialogTitleButton aria-label="选项"><Gear color="#fff" /></DialogTitleButton>
            <h1>特征几何体</h1>
            <DialogTitleButton $line aria-label="重置"><Svg $w={14} viewBox="0 0 14 14"><path d="M8 2q5 3 2 7-3 3-8 0" fill="none" stroke="#fff" strokeWidth="2.500" /><path d="M2 5v4h4" fill="none" stroke="#fff" strokeWidth="1.500" /></Svg></DialogTitleButton>
            <DialogTitleButton $line aria-label="关闭"><Svg $w={12} viewBox="0 0 12 12"><path d="m1 1 10 10M11 1 1 11" stroke="#fff" strokeWidth="2.500" /></Svg></DialogTitleButton>
        </DialogTitle>
        <DialogBody>
            <DialogScroll>
                <SectionHead><span>公共参数</span><Fold /></SectionHead>
                <Section>
                    <Row><label htmlFor="workpiece">过程工件</label><Select id="workpiece" value="无" width={140} /></Row>
                    <Row>
                        <label htmlFor="area">加工区域</label>
                        <Select id="area" value="FACES_CYLINDER_2" width={140} open>
                            <Options role="listbox">
                                {faceOptions.map((name) => (
                                    <Option key={name} role="option" $selected={name === "FACES_CYLINDER_2"}>{name}</Option>
                                ))}
                            </Options>
                        </Select>
                    </Row>
                    <Group $gap={1} $bottom={7}>
                        <GroupHead $gap={3}>切削参数</GroupHead>
                        <Row $h={25}><CheckLabel><input type="checkbox" />使用预定义深度</CheckLabel></Row>
                        <Row $h={25}><span>底部余量</span></Row>
                        <Row $h={25}>
                            <label htmlFor="sideStock">部件侧面余量</label>
                            <NumberInput id="sideStock" $indent={21} defaultValue="0.00000" />
                            <IconButton aria-label="锁定"><Lock gold /></IconButton>
                        </Row>
                    </Group>
                </Section>
                <SectionHead><span>特征</span><Fold /></SectionHead>
                <Section $top={6}>
                    <SelectRow $h={31} $pad={2}>
                        <Check /><span>选择对象 (1)</span>
                        <IconButton aria-label="添加"><Svg $w={20} viewBox="0 0 20 20"><path d="M12 2v9M8 6h9" stroke="#111" strokeWidth="1.500" /><path d="M2 10q0 5 5 4v-3l4 4-4 4v-2q-6 0-5-7" fill="#e07b28" /><path d="M12 16h7" stroke="#111" strokeWidth="2" strokeDasharray="2 1" /></Svg></IconButton>
                        <IconButton $s={30} $hot aria-label="选择对象"><Svg $w={20} viewBox="0 0 20 20"><circle cx="10" cy="10" r="5" fill="none" stroke="#c81010" strokeWidth="1.500" /><path d="M10 0v20M0 10h20" stroke="#222" strokeWidth="1.300" /></Svg></IconButton>
                    </SelectRow>
                    <Row $h={37} $pad={2}>
                        <Check /><span>指定方位</span>
                        <IconButton $s={30} aria-label="指定方位">
                            <Svg $w={24} viewBox="0 0 24 24"><path d="M4 16V3" stroke="#1010a8" strokeWidth="1.500" /><path d="m4 0 3 5H1z" fill="#1010a8" /><path d="M4 16 17 10" stroke="#148c28" strokeWidth="1.500" /><path d="m20 9-5 0 2 4z" fill="#148c28" /><path d="m4 16 12 5" stroke="#b01818" strokeWidth="1.500" /><path d="m19 22-3-3-1 4z" fill="#b01818" /><g fontSize="8" fontWeight="bold" fontFamily="Liberation Sans"><text x="8" y="6">Z</text><text x="19" y="12">Y</text><text x="19" y="24">X</text></g></Svg>
                        </IconButton>
                    </Row>
                    {lockedValues.map(([label, value, indent]) => (
                        <Row key={label} $h={26} $dim>
                            <label htmlFor={label}>{label}</label>
                            <NumberInput id={label} disabled $indent={indent} defaultValue={value} />
                            <IconButton aria-label="锁定"><Lock /></IconButton>
                        </Row>
                    ))}
                    <Row><label htmlFor="limit">深度限制</label><Select id="limit" value="通孔" width={140} /></Row>
                    <Row $h={34}><span>反向</span><IconButton $s={30} aria-label="反向"><ReverseIcon /></IconButton></Row>
                    <Group $gap={1} $bottom={8}>
                        <GroupHead $gap={6}>列表<Fold /></GroupHead>
                        <ListArea>
                            <ListFrame>
                                <ListTable>
                                    <colgroup><col width="50" /><col width="80" /><col width="70" /><col width="80" /></colgroup>
                                    <thead><tr><th>项</th><th>直径</th><th>深度</th><th>起始直径</th></tr></thead>
                                    <tbody>
                                        <tr><td>1</td><td>15.000</td><td>15.000</td><td>&nbsp;&nbsp;0.000</td></tr>
                                        <tr><td /><td /><td /><td /></tr>
                                        <tr><td /><td /><td /><td /></tr>
                                    </tbody>
                                </ListTable>
                                <HScroll><SideArrow /><HThumb $w={113}>III</HThumb><SideArrow $right /></HScroll>
                            </ListFrame>
                            <ListButtons>
                                <IconButton aria-label="移除"><Svg $w={16} viewBox="0 0 16 16"><path d="m2 2 12 12M14 2 2 14" stroke="#222" strokeWidth="2.500" /></Svg></IconButton>
                                {Object.keys(moves).map((dir) => (
                                    <IconButton key={dir} disabled aria-label={dir}><Svg $w={16} viewBox="0 0 16 16"><path d={moves[dir]} fill="#8f9696" /></Svg></IconButton>
                                ))}
                            </ListButtons>
                        </ListArea>
                    </Group>
                    <Group $gap={3} $bottom={1}>
                        <GroupHead>预览<Fold /></GroupHead>
                        <Row $h={44}><span>显示</span><IconButton $s={30} aria-label="显示"><TorchIcon /></IconButton></Row>
                    </Group>
                </Section>
                <SectionHead><span>序列</span><Fold /></SectionHead>
                <Section>
                    <Row><label htmlFor="optimize">优化</label><Select id="optimize" value="最接近" width={140} /></Row>
                    <Row $h={34}><span>重新排序列表</span><IconButton $s={30} aria-label="重新排序列表"><Svg $w={24} viewBox="0 0 24 24"><path d="M18 6A9 9 0 1 0 19 18" fill="none" stroke="#3b479b" strokeWidth="3" /><path d="m13 17 9 3V10z" fill="#2b368e" /></Svg></IconButton></Row>
                    <Row $h={34}><span>反序列表</span><IconButton $s={30} aria-label="反序列表"><ReverseIcon /></IconButton></Row>
                </Section>
            </DialogScroll>
            <VScroll>
                <VArrow $up aria-label="向上滚动"><Svg $w={7} viewBox="0 0 7 7"><path d="M0 5h7L3.500 1z" fill="#555" /></Svg></VArrow>
                <VThumb><Svg $w={7} viewBox="0 0 7 7"><path d="M0 .500h7M0 3.500h7M0 6.500h7" stroke="#3684b8" /></Svg></VThumb>
                <VArrow aria-label="向下滚动"><Svg $w={7} viewBox="0 0 7 7"><path d="M0 2h7L3.500 6z" fill="#555" /></Svg></VArrow>
            </VScroll>
        </DialogBody>
        <DialogFooter>
            <FooterButton $ok>确定</FooterButton>
            <FooterButton>取消</FooterButton>
        </DialogFooter>
    </Dialog>
);

const SystemBar = () => (
    <Taskbar>
        <Spacer $w={8} />
        <PlainButton aria-label="开始">
            <Svg $w={38} $h={28} viewBox="0 0 38 28">
                <circle cx="19" cy="13" r="18" fill="#1f5b94" stroke="#9fc3dd" />
                <path d="M3 9Q19-6 35 9q-16 9-32 0" fill="#8dbbdc" opacity=".7" />
                <path d="M11 6q4-3 8 0l-2 7q-4-2-8 0z" fill="#f0622a" />
                <path d="M20 6q4 3 9 0l-2 7q-4 3-9 0z" fill="#86c440" />
                <path d="M9 15q4-3 8 0l-2 7q-4-2-8 0z" fill="#49a6ea" />
                <path d="M18 15q4 3 9 0l-2 7q-4 3-9 0z" fill="#fbcb3a" />
            </Svg>
        </PlainButton>
        <Spacer $w={25} />
        <PlainButton aria-label="Internet Explorer">
            <Svg $w={20} viewBox="0 0 20 20">
                <path d="M4 10.500h12a5.500 5.500 0 1 0-1.500 4" fill="none" stroke="#3aa3ea" strokeWidth="3" />
                <path d="M3 18Q-1 14 9 6q8-6 9-3" fill="none" stroke="#f2c33c" strokeWidth="1.500" />
            </Svg>
        </PlainButton>
        <Spacer $w={14} />
        <TaskButton $active><NxLogo size={16} />NX 12 - 加工</TaskButton>
        <TaskButton>
            <Svg $w={16} viewBox="0 0 16 16"><circle cx="8" cy="8" r="7.500" fill="#58b832" /><path d="M4 8h8a4 3.500 0 1 0-1 3" fill="none" stroke="#fff" strokeWidth="1.800" /></Svg>
            求助，ug12.0编程孔...
        </TaskButton>
        <Spacer />
        <Svg $w={16} viewBox="0 0 16 16"><path d="M1 6h14v8H1z" fill="#ddd" stroke="#777" /><path d="M3 8h10M3 10h10M4 12h8" stroke="#555" strokeDasharray="1 1" /><path d="M7 6q2-5 6-4" fill="none" stroke="#ccc" /></Svg>
        <Spacer $w={14} />
        <Svg $w={16} viewBox="0 0 16 16"><path d="M8 0q4 2 7 2 0 10-7 14Q1 12 1 2q3 0 7-2" fill="#4da52e" stroke="#eee" strokeWidth="1.500" /><path d="M9 3 5 9h3l-1 4 4-6H8z" fill="#fff" /></Svg>
        <Spacer $w={8} />
        <Svg $w={17} viewBox="0 0 17 17"><circle cx="8.500" cy="8.500" r="8" fill="#f2d314" /><path d="M1 9a8 8 0 0 0 15 0q-4 4-8 1T1 9" fill="#5db52b" /><path d="M8.500 4v9M4 8.500h9" stroke="#124a12" strokeWidth="2.500" /></Svg>
        <Spacer $w={7} />
        <Svg $w={16} viewBox="0 0 16 16"><path d="M2 0h5v5H2zM1 5h7v8H1z" fill="#bbb" stroke="#777" /><circle cx="11" cy="11" r="4.800" fill="#35a83a" /><path d="m8.500 11 2 2 3-4" fill="none" stroke="#fff" strokeWidth="1.500" /></Svg>
        <Spacer $w={8} />
        <Svg $w={15} viewBox="0 0 15 15"><path d="M1 11h2v2H1zM4 9h2v4H4zM7 7h2v6H7zM10 4h2v9h-2zM13 2h2v11h-2z" fill="#fff" /></Svg>
        <Spacer $w={9} />
        <Svg $w={15} viewBox="0 0 15 15"><path d="M0 5h3l4-4v13l-4-4H0z" fill="#fff" /><path d="M9 5q2 2 0 5M11 3q4 4 0 9" fill="none" stroke="#fff" strokeWidth="1.300" /></Svg>
        <Spacer $w={20} />
        <time>12:57</time>
        <Spacer $w={13} />
        <ShowDesktop aria-label="显示桌面" />
    </Taskbar>
);

const App = () => (
    <>
        <GlobalStyle />
        <Page>
            <TopHeader />
            <RibbonBar />
            <SelectionTools />
            <Workspace>
                <Resources />
                <OperationNavigator />
                <Spacer $w={344} />
                <ModelView />
            </Workspace>
            <StatusBar>
                选择切削区域几何体
                <Spacer $w={565} />
                STEP2HOLE : STEP2HOLE_1
                <Spacer />
                <Svg $w={15} viewBox="0 0 15 15"><path d="M.500 3V.500H3M12 .500h2.500V3M14.500 12v2.500H12M3 14.500H.500V12" fill="none" stroke="#333" /><path d="M3.500 3.500h8v8h-8z" fill="#2c6eb8" stroke="#222" /></Svg>
            </StatusBar>
            <SystemBar />
            <FeatureDialog />
            <Tooltip role="tooltip">FACES_CYLINDER_2</Tooltip>
            <Watermark>
                <Svg $w={72} $h={82} viewBox="0 0 72 82" opacity=".8">
                    <path d="M36 0 72 20v42L36 82 0 62V20z" fill="#3d9ccd" />
                    <path d="M15 12 36 0l16 9q5 10 3 20L36 18q-8-8-21-6" fill="#a3c3d4" stroke="#476" strokeWidth=".5" />
                    <path d="M0 20l15-8q12-1 21 6L16 30Q0 38 0 44z" fill="#7db7d6" />
                    <path d="M0 44q4-9 16-14v24q0 12 6 20L0 62z" fill="#65b5e0" />
                    <path d="M72 20v24q-7 12-17 16L36 67q-12 3-20-13l20 9 19-11V29q2-10-3-20z" fill="#3289b7" />
                    <path d="m36 18 19 11v23L36 63 17 52V29z" fill="#50606a" />
                    <path d="m17 42 0 10 19 11 19-11V42z" fill="#e8f4fa" />
                    <path d="m36 23 16 9-16 8-16-8z" fill="#69a9cb" />
                    <path d="M20 33v16l16 10V41z" fill="#4c9ccb" />
                    <path d="M52 33v16L36 59V41z" fill="#3386b5" />
                </Svg>
                <div>
                    <strong>3D世界网</strong>
                    <small>WWW.3DSJW.COM</small>
                </div>
            </Watermark>
        </Page>
    </>
);

export default App;
